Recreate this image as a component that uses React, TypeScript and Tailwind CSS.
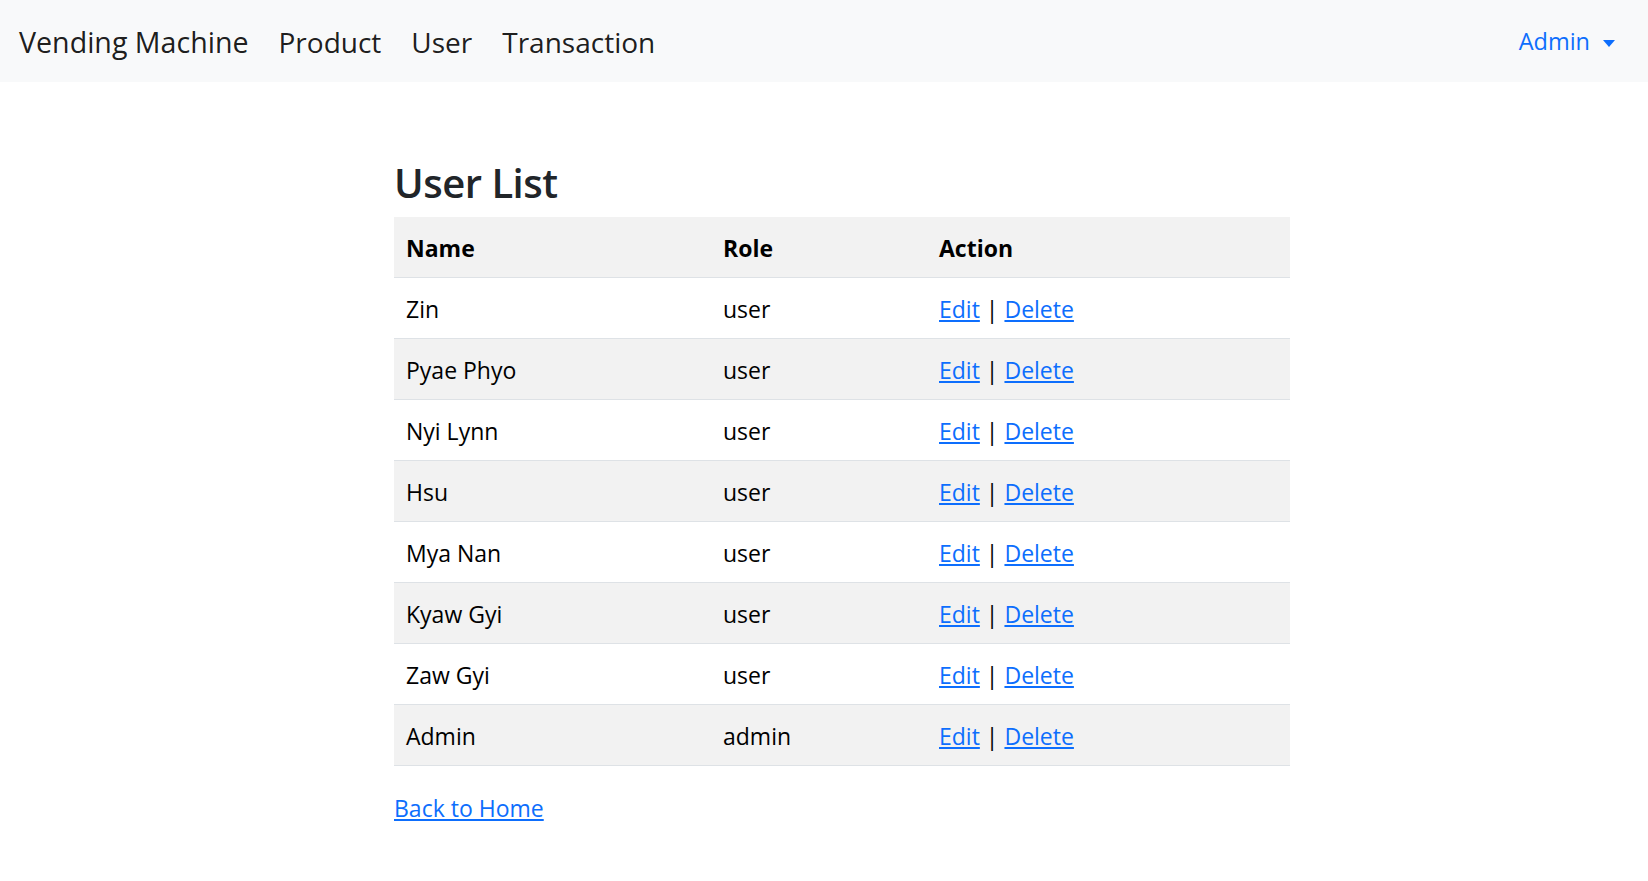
const users = [
  { name: "Zin", role: "user" },
  { name: "Pyae Phyo", role: "user" },
  { name: "Nyi Lynn", role: "user" },
  { name: "Hsu", role: "user" },
  { name: "Mya Nan", role: "user" },
  { name: "Kyaw Gyi", role: "user" },
  { name: "Zaw Gyi", role: "user" },
  { name: "Admin", role: "admin" },
];

export default function App() {
  return (
    <div className="min-h-screen bg-white font-['Open_Sans',sans-serif] text-black">
      {/* Navbar */}
      <nav className="flex h-[82px] items-center justify-between bg-[#f8f9fa] pl-[19px] pr-[33px] pt-[2px]">
        <div className="flex items-center gap-[30px] text-[28px] text-black/90">
          <a href="#" className="text-[28.6px]">Vending Machine</a>
          <a href="#">Product</a>
          <a href="#">User</a>
          <a href="#">Transaction</a>
        </div>
        <button className="flex items-center gap-[13px] text-[23.5px] text-[#0d6efd]">
          Admin
          <span className="mt-[2px] h-0 w-0 border-x-[6px] border-t-[7px] border-x-transparent border-t-[#0d6efd]" />
        </button>
      </nav>

      {/* Content */}
      <main className="ml-[394px] w-[896px] pt-[73px]">
        <h2 className="mb-[6px] text-[40px] font-semibold leading-[56px] tracking-[-0.5px] text-[#212529]">User List</h2>

        <table className="mb-[24px] w-full border-collapse text-left text-[23px] leading-[36px]">
          <tbody>
            <tr className="border-b border-[#dee2e6] bg-[#f2f2f2] font-bold">
              <td className="w-[317px] px-[12px] pt-[13px] pb-[11px]">Name</td>
              <td className="w-[216px] px-[12px] pt-[13px] pb-[11px]">Role</td>
              <td className="px-[12px] pt-[13px] pb-[11px]">Action</td>
            </tr>
            {users.map((u, i) => (
              <tr
                key={u.name}
                className={`border-b border-[#dee2e6] ${i % 2 === 1 ? "bg-[#f2f2f2]" : "bg-white"}`}
              >
                <td className="px-[12px] pt-[13px] pb-[11px]">{u.name}</td>
                <td className="px-[12px] pt-[13px] pb-[11px]">{u.role}</td>
                <td className="px-[12px] pt-[13px] pb-[11px]">
                  <a href="#" className="text-[#0d6efd] underline">Edit</a>
                  {" | "}
                  <a href="#" className="text-[#0d6efd] underline">Delete</a>
                </td>
              </tr>
            ))}
          </tbody>
        </table>

        <a href="#" className="text-[23px] leading-[36px] text-[#0d6efd] underline">
          Back to Home
        </a>
      </main>
    </div>
  );
}
